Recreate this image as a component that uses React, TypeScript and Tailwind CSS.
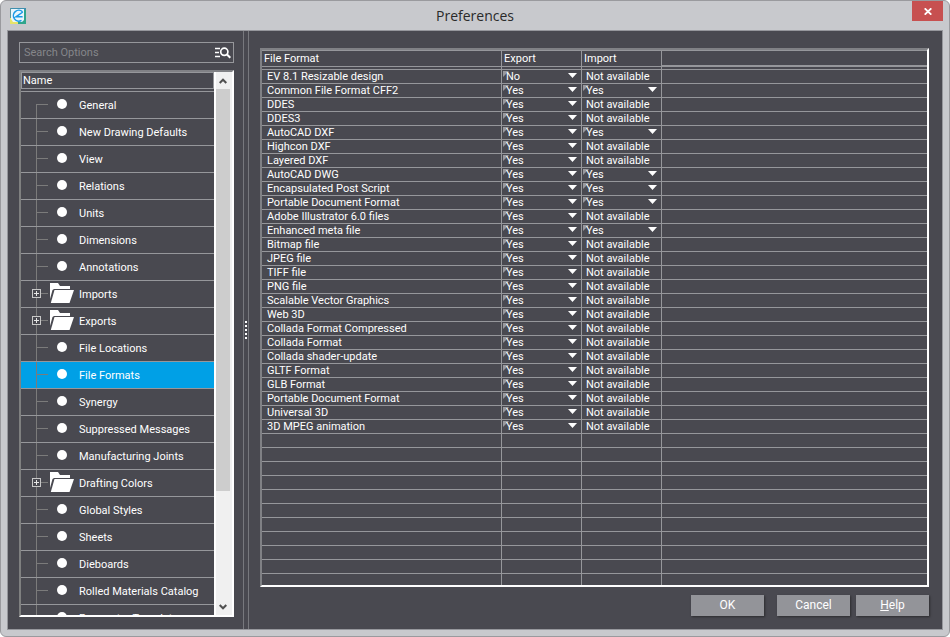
import { useState } from "react";
import clsx from "clsx";

type Kind = "item" | "folder";

const OPTIONS: { label: string; kind: Kind }[] = [
  { label: "General", kind: "item" },
  { label: "New Drawing Defaults", kind: "item" },
  { label: "View", kind: "item" },
  { label: "Relations", kind: "item" },
  { label: "Units", kind: "item" },
  { label: "Dimensions", kind: "item" },
  { label: "Annotations", kind: "item" },
  { label: "Imports", kind: "folder" },
  { label: "Exports", kind: "folder" },
  { label: "File Locations", kind: "item" },
  { label: "File Formats", kind: "item" },
  { label: "Synergy", kind: "item" },
  { label: "Suppressed Messages", kind: "item" },
  { label: "Manufacturing Joints", kind: "item" },
  { label: "Drafting Colors", kind: "folder" },
  { label: "Global Styles", kind: "item" },
  { label: "Sheets", kind: "item" },
  { label: "Dieboards", kind: "item" },
  { label: "Rolled Materials Catalog", kind: "item" },
  { label: "Parameter Templates", kind: "item" },
];

// [name, export, import available]
const FORMATS: [string, string, boolean][] = [
  ["EV 8.1 Resizable design", "No", false],
  ["Common File Format CFF2", "Yes", true],
  ["DDES", "Yes", false],
  ["DDES3", "Yes", false],
  ["AutoCAD DXF", "Yes", true],
  ["Highcon DXF", "Yes", false],
  ["Layered DXF", "Yes", false],
  ["AutoCAD DWG", "Yes", true],
  ["Encapsulated Post Script", "Yes", true],
  ["Portable Document Format", "Yes", true],
  ["Adobe Illustrator 6.0 files", "Yes", false],
  ["Enhanced meta file", "Yes", true],
  ["Bitmap file", "Yes", false],
  ["JPEG file", "Yes", false],
  ["TIFF file", "Yes", false],
  ["PNG file", "Yes", false],
  ["Scalable Vector Graphics", "Yes", false],
  ["Web 3D", "Yes", false],
  ["Collada Format Compressed", "Yes", false],
  ["Collada Format", "Yes", false],
  ["Collada shader-update", "Yes", false],
  ["GLTF Format", "Yes", false],
  ["GLB Format", "Yes", false],
  ["Portable Document Format", "Yes", false],
  ["Universal 3D", "Yes", false],
  ["3D MPEG animation", "Yes", false],
];

const EMPTY_ROWS = Array.from({ length: 40 }, (_, i) => i);

const Logo = () => (
  <svg width="16" height="16" viewBox="0 0 16 16" aria-hidden="true">
    <path d="M0 0H8V16H0Z" fill="#e8e36a" />
    <path d="M8 0H16V16H8Z" fill="#2fa58c" />
    <path d="M0 0H16V2H0Z" fill="#3f8fae" />
    <path d="M0 0H1V10H0Z" fill="#5c97a0" />
    <path d="M1 1H14V12L12 14H3L1 11Z" fill="#e9f6fd" />
    <path
      d="M12.5 3.8A5.4 5.4 0 1 0 11.5 12.4M12.8 4L6 8.8H12.6"
      fill="none"
      stroke="#1a9be6"
      strokeWidth="1.5"
    />
  </svg>
);

const SearchIcon = () => (
  <svg width="16" height="12" viewBox="0 0 16 12" fill="none" stroke="#fff" aria-hidden="true">
    <path d="M0 1.5H5M0 5.5H4M0 9.5H5" strokeWidth="1.5" />
    <circle cx="9.3" cy="4.8" r="3.6" strokeWidth="1.7" />
    <path d="M12 7.5L15.3 10.8" strokeWidth="2" />
  </svg>
);

const FolderIcon = () => (
  <svg width="24" height="20" viewBox="0 0 24 20" fill="#fff" aria-hidden="true">
    <path d="M0 0H8L10 3H20V6H4L2.5 7L0 16Z" />
    <path d="M4.5 7H24L19.5 20H0.8Z" />
  </svg>
);

const Chevron = ({ down }: { down?: boolean }) => (
  <svg
    width="8"
    height="6"
    viewBox="0 0 8 6"
    fill="none"
    stroke="#505050"
    strokeWidth="2"
    className={clsx(down && "rotate-180")}
    aria-hidden="true"
  >
    <path d="M0.7 5L4 1.7L7.3 5" />
  </svg>
);

const TreeRow = ({
  label,
  kind,
  first,
  selected,
  onSelect,
}: {
  label: string;
  kind: Kind;
  first: boolean;
  selected: boolean;
  onSelect: () => void;
}) => (
  <li>
    <button
      type="button"
      onClick={onSelect}
      className={clsx(
        "flex h-[27px] w-full items-center border-b border-[#96979b] pl-[15px] text-left",
        selected && "bg-[#00a0e6]"
      )}
    >
      <span className="relative flex w-3 flex-col self-stretch">
        <span
          className={clsx(
            "h-[13px] border-b border-[#7b7b7b]",
            !first && "border-l"
          )}
        />
        <span className="flex-1 border-l border-[#7b7b7b]" />
        {kind === "folder" && (
          <span className="absolute top-2 -left-1 flex size-[9px] items-center justify-center border border-[#c8c8c8] bg-[#494950]">
            <svg width="5" height="5" viewBox="0 0 5 5" fill="#e6e6e6" aria-hidden="true">
              <path d="M2 0H3V2H5V3H3V5H2V3H0V2H2Z" />
            </svg>
          </span>
        )}
      </span>
      <span className="flex w-7 justify-center pb-[2px]">
        {kind === "folder" ? (
          <FolderIcon />
        ) : (
          <span className="size-[10px] rounded-full bg-white" />
        )}
      </span>
      <span className="pt-[2px] pl-[3px] whitespace-nowrap">{label}</span>
    </button>
  </li>
);

const Sidebar = () => {
  const [active, setActive] = useState("File Formats");

  return (
    <aside className="flex w-[215px] shrink-0 flex-col pt-[11px] pb-3">
      <label className="flex h-[21px] shrink-0 items-center border border-[#96979b] pr-[2px] pl-1">
        <input
          type="text"
          aria-label="Search Options"
          placeholder="Search Options"
          className="min-w-0 flex-1 bg-transparent pt-[2px] outline-none placeholder:text-[#85868a]"
        />
        <SearchIcon />
      </label>
      <div className="mt-[7px] flex min-h-0 flex-1 border-t-2 border-r-2 border-b-2 border-l-2 border-t-[#808185] border-r-white border-b-white border-l-[#7f8080]">
        <div className="flex min-h-0 min-w-0 flex-1 basis-0 flex-col">
          <div className="flex h-[17px] shrink-0 items-center border border-[#96979b] pt-[2px] pl-px">
            Name
          </div>
          <ul className="mt-[2px] min-h-0 flex-1 overflow-hidden border-t border-[#96979b]">
            {OPTIONS.map((o, i) => (
              <TreeRow
                key={o.label}
                {...o}
                first={i === 0}
                selected={o.label === active}
                onSelect={() => setActive(o.label)}
              />
            ))}
          </ul>
        </div>
        <div className="flex w-[18px] flex-col border-x-2 border-l-white border-r-[#f0f0f0] bg-[#f0f0f0]">
          <button type="button" aria-label="Scroll up" className="flex h-[17px] items-center justify-center">
            <Chevron />
          </button>
          <div className="flex-1">
            <div className="h-[79%] bg-[#cdcdcd]" />
          </div>
          <button type="button" aria-label="Scroll down" className="flex h-[17px] items-center justify-center">
            <Chevron down />
          </button>
        </div>
      </div>
    </aside>
  );
};

const Splitter = () => (
  <div className="mr-[11px] ml-[9px] flex w-[6px] shrink-0 flex-col items-center justify-center gap-[2px] border-x border-[#77787d]">
    {[0, 1, 2, 3, 4].map((d) => (
      <span key={d} className="size-[2px] bg-white" />
    ))}
  </div>
);

const CellSelect = ({ label, value }: { label: string; value: string }) => (
  <div className="relative">
    <select
      aria-label={label}
      defaultValue={value}
      className="block h-[13px] w-full appearance-none bg-transparent pl-1 leading-[13px] outline-none"
    >
      <option>Yes</option>
      <option>No</option>
    </select>
    <svg
      width="6"
      height="6"
      viewBox="0 0 6 6"
      className="pointer-events-none absolute top-px left-px -z-10"
      aria-hidden="true"
    >
      <path d="M0 0H6L0 6Z" fill="#9a9a9f" />
    </svg>
    <svg
      width="9"
      height="5"
      viewBox="0 0 9 5"
      className="pointer-events-none absolute top-[3px] right-1"
      aria-hidden="true"
    >
      <path d="M0 0H9L4.5 5Z" fill="#fff" />
    </svg>
  </div>
);

const cell = "h-[14px] border-r border-b border-[#96979b] p-0";
const lastCell = "h-[14px] border-b border-[#96979b] p-0";

const FormatTable = () => (
  <div className="isolate min-h-0 flex-1 basis-0 overflow-hidden border-2 border-t-[#808185] border-r-white border-b-white border-l-[#808185]">
    <table className="w-full table-fixed border-separate border-spacing-0 leading-[13px]">
      <colgroup>
        <col className="w-[240px]" />
        <col className="w-[80px]" />
        <col className="w-[80px]" />
        <col />
      </colgroup>
      <thead>
        <tr>
          {["File Format", "Export", "Import"].map((h) => (
            <th key={h} className="h-5 border-r border-b border-[#96979b] p-0 text-left align-top font-normal">
              <div className="h-[17px] border-y border-[#96979b] pt-px pl-[2px]">{h}</div>
            </th>
          ))}
          <td className="h-5 border-b border-[#96979b] p-0 align-top">
            <div className="h-[17px] border-t border-b-2 border-[#96979b]" />
          </td>
        </tr>
      </thead>
      <tbody>
        {FORMATS.map(([name, exp, imp], i) => (
          <tr key={i}>
            <td className={cell}>
              <div className="pl-[5px]">{name}</div>
            </td>
            <td className={cell}>
              <CellSelect label={`Export ${name}`} value={exp} />
            </td>
            <td className={cell}>
              {imp ? (
                <CellSelect label={`Import ${name}`} value="Yes" />
              ) : (
                <div className="pl-1">Not available</div>
              )}
            </td>
            <td className={lastCell} />
          </tr>
        ))}
        {EMPTY_ROWS.map((r) => (
          <tr key={r}>
            <td className={cell} />
            <td className={cell} />
            <td className={cell} />
            <td className={lastCell} />
          </tr>
        ))}
      </tbody>
    </table>
  </div>
);

const btn =
  "h-[21px] w-[73px] bg-[#939499] text-center text-[12px] leading-[21px] shadow-[1px_1px_2px_#2c2c30]";

export default function App() {
  return (
    <div className="h-screen bg-white font-[Roboto,sans-serif] text-[11px] text-white">
      <div className="flex h-full flex-col rounded-md border border-[#9a9a9e] bg-[#c8c9cd] px-[6px] pb-[6px]">
        <header className="grid h-[29px] shrink-0 grid-cols-[1fr_auto_1fr] items-center">
          <div className="pl-[3px]">
            <Logo />
          </div>
          <h1 className="font-['Open_Sans',sans-serif] text-[14px] text-[#2a2a2a]">Preferences</h1>
          <button
            type="button"
            aria-label="Close"
            className="flex h-5 w-[31px] items-center justify-center self-start justify-self-end bg-[#c75050]"
          >
            <svg width="8" height="7" viewBox="0 0 8 7" stroke="#fff" strokeWidth="1.8" aria-hidden="true">
              <path d="M0.7 0.3L7.3 6.7M7.3 0.3L0.7 6.7" />
            </svg>
          </button>
        </header>
        <div className="flex min-h-0 flex-1 border border-[#96979c] bg-[#494950] pl-[11px]">
          <Sidebar />
          <Splitter />
          <main className="flex min-w-0 flex-1 flex-col pt-[17px] pr-[13px] pb-[13px]">
            <FormatTable />
            <div className="mt-2 flex shrink-0 justify-end">
              <button type="button" className={btn}>
                OK
              </button>
              <button type="button" className={`${btn} ml-[13px]`}>
                Cancel
              </button>
              <button type="button" className={`${btn} ml-[6px]`}>
                <u>H</u>elp
              </button>
            </div>
          </main>
        </div>
      </div>
    </div>
  );
}
